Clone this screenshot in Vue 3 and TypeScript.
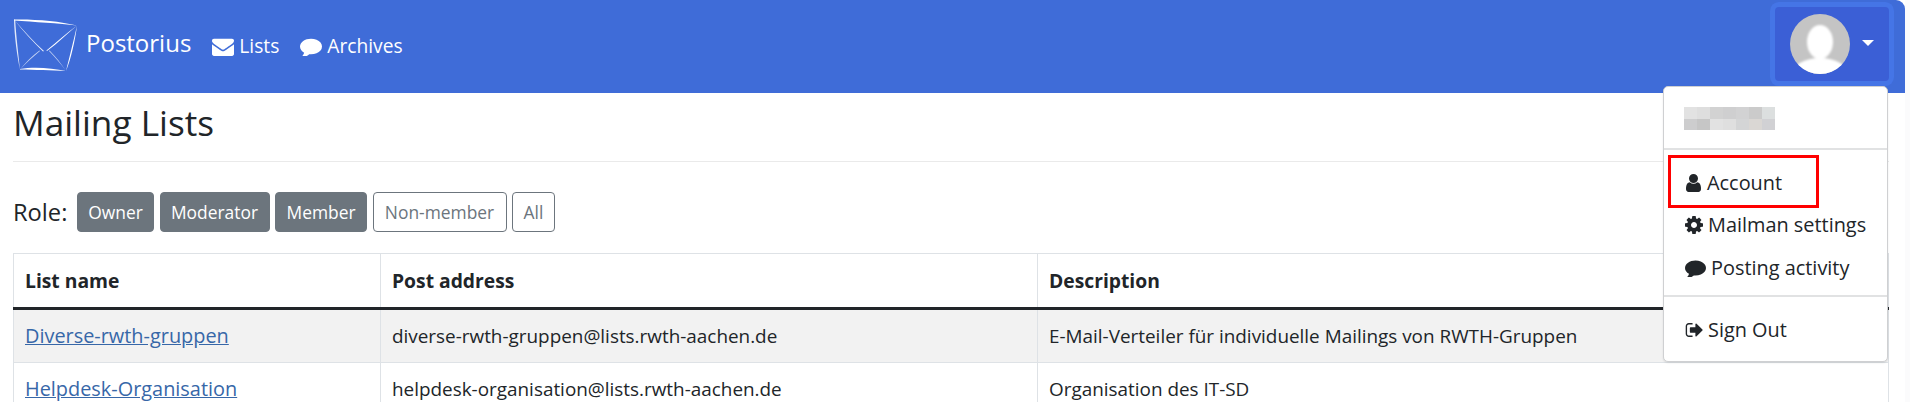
<script setup lang="ts">
interface Row { name: string; post: string; desc: string }
const rows: Row[] = [
  { name: 'Diverse-rwth-gruppen', post: 'diverse-rwth-gruppen@lists.rwth-aachen.de', desc: 'E-Mail-Verteiler für individuelle Mailings von RWTH-Gruppen' },
  { name: 'Helpdesk-Organisation', post: 'helpdesk-organisation@lists.rwth-aachen.de', desc: 'Organisation des IT-SD' },
]
const roles = [
  { label: 'Owner', on: true },
  { label: 'Moderator', on: true },
  { label: 'Member', on: true },
  { label: 'Non-member', on: false },
  { label: 'All', on: false },
]
const blur = ['#e2e2e2', '#dedede', '#d2d2d2', '#cfcfd0', '#d2d2d3', '#cbcbcb', '#dcdfdf',
  '#cdcdce', '#c6c6c6', '#e2e2e2', '#dfdfdf', '#d4d5d6', '#dad7d4', '#d1d1d4']
</script>

<template>
  <div class="page">
    <nav class="nav">
      <a class="brand">
        <svg class="logo" viewBox="0 0 64 54" aria-hidden="true">
          <g fill="#fff">
            <path d="M0 0.5 C20 0 45 2 63 6.5 C45 4.5 20 3 0 1.6Z" />
            <path d="M0 0.5 C0.5 18 3 36 6 50.5 C4.5 36 2 16 1.2 1Z" opacity=".85" />
            <path d="M63 6.5 C61 22 57 40 52 52 C55 40 59.5 22 63 6.5Z" />
            <path d="M6 50 C20 47.5 38 49 52 52 C38 51.5 20 51 6 50.6Z" />
            <path d="M0.5 1 C10 12 20 23 30 32 L29 32.5 C19 23 9 12 0.5 1Z" opacity=".9" />
            <path d="M63 6.5 C54 14 44 24 33 32 L32.4 31.4 C43 23 53 14 63 6.5Z" />
            <path d="M6 50.5 C12 43 18 37 25.5 31.5 L26 32 C19 38 12 44 6 50.5Z" opacity=".7" />
            <path d="M52 52 C47 45 41 38 35 32 L35.6 31.6 C42 38 47.5 45 52 52Z" opacity=".7" />
          </g>
        </svg>
        <span class="brand-text">Postorius</span>
      </a>
      <a class="nav-link">
        <svg class="nav-ico" viewBox="0 128 1792 1536" aria-hidden="true"><path d="M1792 710v794q0 66-47 113t-113 47h-1472q-66 0-113-47t-47-113v-794q44 49 101 87 362 246 497 345 57 42 92.5 65.5t94.5 48 110 24.5h2q51 0 110-24.5t94.5-48 92.5-65.5q170-123 498-345 57-39 100-87zm0-294q0 79-49 151t-122 123q-376 261-468 325-10 7-42.5 30.5t-54 38-52 32.5-57.5 27-50 9h-2q-23 0-50-9t-57.5-27-52-32.5-54-38-42.5-30.5q-91-64-262-182.5t-205-142.5q-62-42-117-115.5t-55-136.5q0-78 41.5-130t118.5-52h1472q65 0 112.5 47t47.5 113z" /></svg>
        Lists
      </a>
      <a class="nav-link">
        <svg class="nav-ico" viewBox="0 128 1792 1536" aria-hidden="true"><path d="M1792 896q0 174-120 321.5t-326 233-450 85.5q-70 0-145-8-198 175-460 242-49 14-114 22-17 2-30.5-9t-17.5-29v-1q-3-4-.5-12t2-10 4.5-9.5l6-9 7-8.5 8-9q7-8 31-34.5t34.5-38 31-39.5 32.5-51 27-59 26-76q-157-89-247.5-220t-90.5-281q0-130 71-248.5t191-204.5 286-136.5 348-50.5q244 0 450 85.5t326 233 120 321.5z" /></svg>
        Archives
      </a>
      <div class="user">
        <button class="toggle" type="button">
          <svg class="avatar" viewBox="0 0 60 60" aria-hidden="true">
            <defs>
              <filter id="soft"><feGaussianBlur stdDeviation="0.9" /></filter>
              <clipPath id="round"><circle cx="30" cy="30" r="30" /></clipPath>
            </defs>
            <circle cx="30" cy="30" r="30" fill="#c4c4c4" />
            <g clip-path="url(#round)" fill="#fff" filter="url(#soft)">
              <ellipse cx="30" cy="28" rx="13" ry="17" />
              <ellipse cx="30" cy="60" rx="28" ry="16" />
            </g>
          </svg>
          <span class="caret"></span>
        </button>
        <div class="menu">
          <div class="menu-head">
            <div class="pixels">
              <span v-for="(c, i) in blur" :key="i" :style="{ background: c }"></span>
            </div>
          </div>
          <div class="menu-group first">
            <a class="item">
              <svg class="ico i-user" viewBox="256 128 1280 1536" aria-hidden="true"><path d="M1536 1399q0 109-62.5 187t-150.5 78h-854q-88 0-150.5-78t-62.5-187q0-85 8.5-160.5t31.5-152 58.5-131 94-89 134.5-34.5q131 128 313 128t313-128q76 0 134.5 34.5t94 89 58.5 131 31.5 152 8.5 160.5zm-256-887q0 159-112.5 271.5t-271.5 112.5-271.5-112.5-112.5-271.5 112.5-271.5 271.5-112.5 271.5 112.5 112.5 271.5z" /></svg>
              Account
            </a>
            <a class="item">
              <svg class="ico i-cog" viewBox="128 128 1536 1536" aria-hidden="true"><path d="M1152 896q0-106-75-181t-181-75-181 75-75 181 75 181 181 75 181-75 75-181zm512-109v222q0 12-8 23t-20 13l-185 28q-19 54-39 91 35 50 107 138 10 12 10 25t-9 23q-27 37-99 108t-94 71q-12 0-26-9l-138-108q-44 23-91 38-16 136-29 186-7 28-36 28h-222q-14 0-24.5-8.5t-11.5-21.5l-28-184q-49-16-90-37l-141 107q-10 9-25 9-14 0-25-11-126-114-165-168-7-10-7-23 0-12 8-23 15-21 51-66.5t54-70.5q-27-50-41-99l-183-27q-13-2-21-12.5t-8-23.5v-222q0-12 8-23t19-13l186-28q14-46 39-92-40-57-107-138-10-12-10-24 0-10 9-23 26-36 98.5-107.5t94.5-71.5q13 0 26 10l138 107q44-23 91-38 16-136 29-186 7-28 36-28h222q14 0 24.5 8.5t11.5 21.5l28 184q49 16 90 37l142-107q9-9 24-9 13 0 25 10 129 119 165 170 7 8 7 22 0 12-8 23-15 21-51 66.5t-54 70.5q26 50 41 98l183 28q13 2 21 12.5t8 23.5z" /></svg>
              Mailman settings
            </a>
            <a class="item">
              <svg class="ico i-comment" viewBox="0 128 1792 1536" aria-hidden="true"><path d="M1792 896q0 174-120 321.5t-326 233-450 85.5q-70 0-145-8-198 175-460 242-49 14-114 22-17 2-30.5-9t-17.5-29v-1q-3-4-.5-12t2-10 4.5-9.5l6-9 7-8.5 8-9q7-8 31-34.5t34.5-38 31-39.5 32.5-51 27-59 26-76q-157-89-247.5-220t-90.5-281q0-130 71-248.5t191-204.5 286-136.5 348-50.5q244 0 450 85.5t326 233 120 321.5z" /></svg>
              Posting activity
            </a>
          </div>
          <div class="menu-group">
            <a class="item">
              <svg class="ico i-out" viewBox="0 192 1664 1408" aria-hidden="true"><path d="M704 1440q0 4 1 20t.5 26.5-3 23.5-10 19.5-20.5 6.5h-320q-119 0-203.5-84.5t-84.5-203.5v-704q0-119 84.5-203.5t203.5-84.5h320q13 0 22.5 9.5t9.5 22.5q0 4 1 20t.5 26.5-3 23.5-10 19.5-20.5 6.5h-320q-66 0-113 47t-47 113v704q0 66 47 113t113 47h312l11.5 1 11.5 3 8 5.5 7 9 2 13.5zm928-544q0 26-19 45l-544 544q-19 19-45 19t-45-19-19-45v-288h-448q-26 0-45-19t-19-45v-384q0-26 19-45t45-19h448v-288q0-26 19-45t45-19 45 19l544 544q19 19 19 45z" /></svg>
              Sign Out
            </a>
          </div>
          <div class="mark"></div>
        </div>
      </div>
    </nav>

    <main class="main">
      <h1 class="title">Mailing Lists</h1>
      <div class="roles">
        <span class="role-label">Role:</span>
        <a v-for="r in roles" :key="r.label" class="btn" :class="{ on: r.on }">{{ r.label }}</a>
      </div>
      <table class="table">
        <colgroup>
          <col class="c1" />
          <col class="c2" />
          <col />
        </colgroup>
        <thead>
          <tr>
            <th>List name</th>
            <th>Post address</th>
            <th>Description</th>
          </tr>
        </thead>
        <tbody>
          <tr v-for="r in rows" :key="r.name">
            <td><a class="link">{{ r.name }}</a></td>
            <td>{{ r.post }}</td>
            <td>{{ r.desc }}</td>
          </tr>
        </tbody>
      </table>
    </main>
  </div>
</template>

<style>
html, body { margin: 0; background: #fbfbfc; overflow: hidden; }
</style>

<style scoped>
.page {
  width: 1905px;
  height: 402px;
  overflow: hidden;
  background: #fff;
  font-family: "Open Sans", "Noto Sans", sans-serif;
  font-size: 18.9px;
  line-height: 28px;
  color: #212529;
}
.nav {
  display: flex;
  align-items: center;
  height: 93px;
  box-sizing: border-box;
  padding: 0 16px 0 14px;
  background: #3f6cd8;
  border-top-right-radius: 9px;
  color: #fff;
}
.brand { display: flex; align-items: center; margin-right: 21px; }
.logo { width: 64px; height: 54px; margin-top: -1px; }
.brand-text { font-size: 24px; margin-left: 8px; margin-top: -7px; }
.nav-link { display: flex; align-items: center; margin-right: 21px; font-size: 19.2px; margin-top: -1px; }
.nav-ico { width: 22px; height: 19px; fill: #fff; margin-right: 5px; }
.user { position: relative; margin-left: auto; align-self: flex-start; margin-top: 7px; }
.toggle {
  display: flex;
  align-items: center;
  width: 114px;
  height: 74px;
  padding: 0 0 0 15px;
  background: #3b5fd6;
  border: 0;
  border-radius: 4px;
  box-shadow: 0 0 0 5px #4575e6;
}
.avatar { width: 60px; height: 60px; }
.caret {
  width: 0;
  height: 0;
  margin: -3px 0 0 12px;
  border-top: 6px solid #fff;
  border-left: 6px solid transparent;
  border-right: 6px solid transparent;
}
.menu {
  position: absolute;
  top: 79px;
  right: 1px;
  width: 225px;
  height: 276px;
  box-sizing: border-box;
  background: #fff;
  border: 1px solid #cfd0d2;
  border-radius: 5px;
  box-shadow: 0 1px 2px rgba(0, 0, 0, .1);
  z-index: 2;
}
.menu-head {
  height: 61px;
  box-sizing: border-box;
  padding: 20px 0 0 20px;
}
.pixels { display: grid; grid-template-columns: repeat(7, 13px); grid-auto-rows: 11.5px; }
.menu-group { border-top: 2px solid #e1e2e3; padding: 12px 0 0 21px; }
.menu-group.first { height: 147px; box-sizing: border-box; padding-top: 12px; }
.item { display: flex; align-items: center; height: 42.3px; font-size: 19.9px; color: #212529; }
.ico { height: 18px; fill: #212529; margin-right: 5px; flex: none; }
.i-user { width: 17px; }
.i-cog { width: 18px; }
.i-comment { width: 21px; }
.i-out { width: 18px; }
.mark {
  position: absolute;
  left: 4px;
  top: 68px;
  width: 145px;
  height: 47px;
  border: 3px solid #ff0000;
}
.main { padding: 0 16px 0 13px; }
.title {
  margin: 0;
  height: 69px;
  box-sizing: border-box;
  padding: 4px 0 0 0;
  font-size: 35.2px;
  line-height: 50px;
  font-weight: 400;
  border-bottom: 1px solid #eaeaea;
}
.roles { display: flex; align-items: center; gap: 5.5px; margin-top: 30px; height: 40px; }
.role-label { font-size: 23.7px; width: 58px; margin-left: 0; margin-right: 0.5px; }
.btn {
  display: flex;
  align-items: center;
  justify-content: center;
  height: 40px;
  box-sizing: border-box;
  border: 1px solid #6c757d;
  border-radius: 4px;
  font-size: 17.4px;
  color: #6c757d;
  white-space: nowrap;
}
.btn.on { background: #6c757d; color: #fff; }
.btn:nth-of-type(1) { width: 77px; }
.btn:nth-of-type(2) { width: 110px; }
.btn:nth-of-type(3) { width: 92px; }
.btn:nth-of-type(4) { width: 134px; }
.btn:nth-of-type(5) { width: 43px; }
.table {
  width: 1876px;
  margin-top: 21px;
  table-layout: fixed;
  border-collapse: collapse;
}
.c1 { width: 367px; }
.c2 { width: 657px; }
.table th, .table td {
  padding: 12px 12px 12px 11px;
  border: 1px solid #dee2e6;
  text-align: left;
  vertical-align: top;
  white-space: nowrap;
}
.table th { font-weight: 700; font-size: 19.3px; padding-top: 13px; padding-bottom: 11px; border-bottom: 3px solid #212529; height: 29px; box-sizing: content-box; }
.table tbody tr:first-child { background: #f2f2f2; }
.link { color: #3767a8; text-decoration: underline; font-size: 19.9px; }
</style>
